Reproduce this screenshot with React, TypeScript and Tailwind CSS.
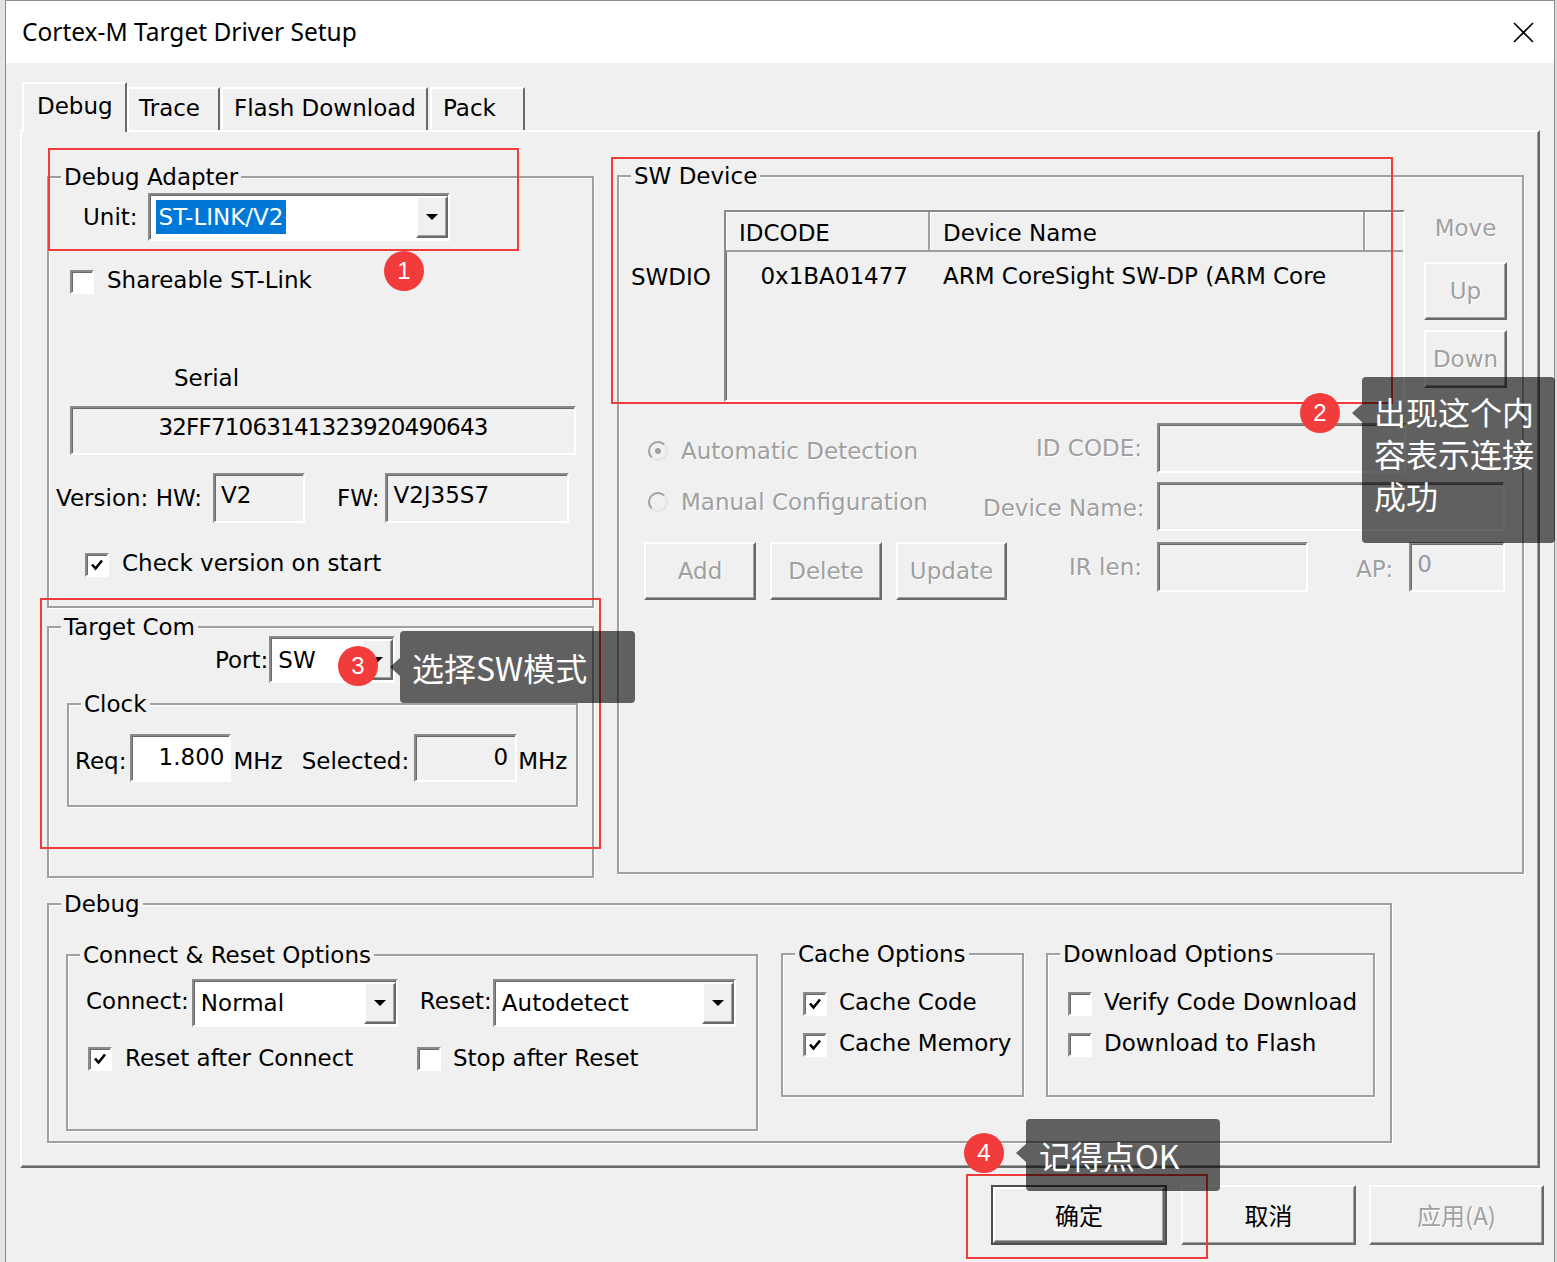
import React from "react";

// classic win32 3d edges
const sunken =
  "border-2 border-t-[#8a8a8a] border-l-[#8a8a8a] border-r-white border-b-white shadow-[inset_1px_1px_0_#696969]";
const raised =
  "border-2 border-t-white border-l-white border-r-[#696969] border-b-[#696969] shadow-[inset_-1px_-1px_0_#a0a0a0]";
const dim = "text-[#a0a0a0] [text-shadow:1px_1px_0_#fff]";
const cjk = "font-['Noto_Sans_CJK_SC',sans-serif]";
const redBox = "absolute border-2 border-[#f23b3b]";

function Group({ label, className = "", children }: { label: string; className?: string; children?: React.ReactNode }) {
  return (
    <div className={`relative shrink-0 border-2 border-[#a0a0a0] shadow-[1px_1px_0_#fff,inset_1px_1px_0_#fff] ${className}`}>
      <span className="absolute -top-[14px] left-[12px] whitespace-nowrap bg-[#f0f0f0] px-[3px] leading-[26px]">{label}</span>
      {children}
    </div>
  );
}

const Arrow = () => <span className="h-0 w-0 border-x-[6px] border-t-[6px] border-x-transparent border-t-black" />;

function Combo({ value, className = "", selected }: { value: string; className?: string; selected?: boolean }) {
  return (
    <div className={`${sunken} flex shrink-0 bg-white ${className}`}>
      <div className="flex flex-1 items-center overflow-hidden whitespace-nowrap pl-[6px]">
        {selected ? <span className="bg-[#0078d7] px-[3px] leading-[34px] text-white">{value}</span> : <span className="pl-[1px]">{value}</span>}
      </div>
      <div className={`${raised} my-[1px] flex w-[32px] items-center justify-center bg-[#f0f0f0]`}>
        <Arrow />
      </div>
    </div>
  );
}

function Field({ className = "", children }: { className?: string; children?: React.ReactNode }) {
  return <div className={`${sunken} shrink-0 whitespace-nowrap ${className}`}>{children}</div>;
}

function CheckBox({ checked }: { checked?: boolean }) {
  return (
    <span className={`${sunken} flex h-[24px] w-[24px] shrink-0 items-center justify-center bg-white`}>
      {checked && (
        <svg width="14" height="14" viewBox="0 0 14 14">
          <path d="M2 6.5 L5.5 10.5 L12 2.5" fill="none" stroke="#000" strokeWidth="2.6" />
        </svg>
      )}
    </span>
  );
}

function Radio({ on }: { on?: boolean }) {
  return (
    <span className="flex h-[20px] w-[20px] shrink-0 items-center justify-center rounded-full border-2 border-t-[#a0a0a0] border-l-[#a0a0a0] border-r-[#e3e3e3] border-b-[#e3e3e3] bg-[#f0f0f0]">
      {on && <span className="h-[6px] w-[6px] rounded-full bg-[#a0a0a0]" />}
    </span>
  );
}

function Btn({ className = "", disabled, children }: { className?: string; disabled?: boolean; children: React.ReactNode }) {
  return (
    <div className={`${raised} flex shrink-0 items-center justify-center bg-[#f0f0f0] ${disabled ? dim : ""} ${className}`}>
      {children}
    </div>
  );
}

function Badge({ n, className }: { n: string; className: string }) {
  return (
    <div className={`absolute flex h-[40px] w-[40px] items-center justify-center rounded-full bg-[#f23b3b] font-['Liberation_Sans',sans-serif] text-[24px] text-white ${className}`}>
      {n}
    </div>
  );
}

function Tip({ className, arrow, children }: { className: string; arrow: string; children: React.ReactNode }) {
  return (
    <div className={`absolute rounded-[4px] bg-black/60 ${cjk} text-[32px] leading-[42px] text-white ${className}`}>
      <span className={`absolute -left-[10px] h-0 w-0 border-y-[9px] border-r-[10px] border-y-transparent border-r-black/60 ${arrow}`} />
      {children}
    </div>
  );
}

function ListView() {
  return (
    <div className={`${sunken} h-[192px] w-[681px] shrink-0 overflow-hidden bg-[#f0f0f0]`}>
      <div className="flex h-[40px] border-b-2 border-[#a0a0a0]">
        <div className="flex w-[204px] items-center border-r-2 border-[#a0a0a0] pl-[13px] pt-[3px] shadow-[inset_1px_1px_0_#fff]">IDCODE</div>
        <div className="flex w-[435px] items-center border-r-2 border-[#a0a0a0] pl-[13px] pt-[3px] shadow-[inset_1px_1px_0_#fff]">Device Name</div>
        <div className="flex-1 shadow-[inset_1px_1px_0_#fff]" />
      </div>
      <div className="flex h-[48px] items-center whitespace-nowrap">
        <div className="w-[204px] pr-[22px] text-right">0x1BA01477</div>
        <div className="w-[435px] overflow-hidden pl-[13px]">ARM CoreSight SW-DP (ARM Core</div>
      </div>
    </div>
  );
}

export default function App() {
  return (
    <div className="relative flex h-[1262px] w-[1557px] overflow-hidden bg-[#e4e4e4] font-['DejaVu_Sans',sans-serif] text-[23px] leading-[26px] text-black">
      <div className="w-[5px] shrink-0 bg-[#e4e4e4]" />
      <div className="flex w-[1550px] shrink-0 flex-col border-x border-t border-[#8c8c8c] bg-[#f0f0f0]">
        {/* Title bar */}
        <div className="flex h-[62px] items-center justify-between bg-white pl-[16px] pr-[20px]">
          <span className="font-['Noto_Sans',sans-serif] text-[24.5px]">Cortex-M Target Driver Setup</span>
          <svg width="21" height="21" viewBox="0 0 21 21">
            <path d="M1 1 L20 20 M20 1 L1 20" stroke="#000" strokeWidth="1.6" />
          </svg>
        </div>

        {/* Tabs */}
        <div className="ml-[16px] mt-[19px] flex h-[48px] items-end">
          <div className="relative z-10 -mb-[2px] h-[50px] w-[105px] border-x-2 border-t-2 border-l-white border-t-white border-r-[#696969] bg-[#f0f0f0] pl-[13px] pt-[9px]">Debug</div>
          <div className="h-[43px] w-[93px] border-x-2 border-t-2 border-l-white border-t-white border-r-[#696969] pl-[10px] pt-[6px]">Trace</div>
          <div className="ml-[1px] h-[43px] w-[207px] border-x-2 border-t-2 border-l-white border-t-white border-r-[#696969] pl-[11px] pt-[6px]">Flash Download</div>
          <div className="ml-[2px] h-[43px] w-[95px] border-x-2 border-t-2 border-l-white border-t-white border-r-[#696969] pl-[11px] pt-[6px]">Pack</div>
        </div>

        {/* Tab page */}
        <div className={`${raised} ml-[14px] h-[1038px] w-[1520px]`}>
          <div className="flex items-start pl-[25px] pt-[43px]">
            {/* left column */}
            <div className="mt-[1px] flex flex-col">
              <Group label="Debug Adapter" className="h-[432px] w-[547px]">
                <div className="ml-[34px] mt-[15px] flex items-center">
                  <span>Unit:</span>
                  <Combo value="ST-LINK/V2" selected className="ml-[10px] h-[48px] w-[302px]" />
                </div>
                <div className="ml-[21px] mt-[29px] flex items-center">
                  <CheckBox />
                  <span className="-mt-[5px] ml-[13px]">Shareable ST-Link</span>
                </div>
                <div className="ml-[125px] mt-[71px]">Serial</div>
                <Field className="ml-[21px] mt-[15px] h-[49px] w-[506px] pt-[6px] text-center tracking-[-0.8px]">32FF71063141323920490643</Field>
                <div className="ml-[7px] mt-[18px] flex items-center">
                  <span>Version: HW:</span>
                  <Field className="ml-[11px] h-[50px] w-[92px] pl-[6px] pt-[7px]">V2</Field>
                  <span className="ml-[32px]">FW:</span>
                  <Field className="ml-[6px] h-[50px] w-[184px] pl-[6px] pt-[7px]">V2J35S7</Field>
                </div>
                <div className="ml-[36px] mt-[30px] flex items-center">
                  <CheckBox checked />
                  <span className="-mt-[5px] ml-[13px]">Check version on start</span>
                </div>
              </Group>

              <Group label="Target Com" className="mt-[18px] h-[252px] w-[547px]">
                <div className="ml-[166px] mt-[8px] flex items-center">
                  <span>Port:</span>
                  <Combo value="SW" className="ml-[1px] h-[47px] w-[126px]" />
                </div>
                <Group label="Clock" className="ml-[18px] mt-[20px] h-[104px] w-[511px]">
                  <div className="ml-[6px] mt-[29px] flex items-center">
                    <span className="mt-[6px]">Req:</span>
                    <Field className="ml-[4px] h-[48px] w-[101px] bg-white pr-[5px] pt-[8px] text-right">1.800</Field>
                    <span className="ml-[2px] mt-[6px]">MHz</span>
                    <span className="ml-[19px] mt-[6px]">Selected:</span>
                    <Field className="ml-[5px] h-[48px] w-[103px] pr-[7px] pt-[8px] text-right">0</Field>
                    <span className="ml-[1px] mt-[6px]">MHz</span>
                  </div>
                </Group>
              </Group>
            </div>

            {/* right column */}
            <Group label="SW Device" className="ml-[23px] h-[699px] w-[907px]">
              <div className="ml-[12px] mt-[33px] flex items-start">
                <div className="w-[93px] pt-[54px]">SWDIO</div>
                <ListView />
                <div className="ml-[19px] flex w-[83px] flex-col items-center">
                  <span className={`mt-[5px] ${dim}`}>Move</span>
                  <Btn disabled className="mt-[21px] h-[58px] w-[83px]">Up</Btn>
                  <Btn disabled className="mt-[10px] h-[58px] w-[83px]">Down</Btn>
                </div>
              </div>

              <div className="ml-[25px] mt-[21px] flex flex-col">
                <div className="flex h-[50px] items-center">
                  <div className="flex w-[339px] items-center pl-[4px] pt-[6px]">
                    <Radio on />
                    <span className={`ml-[13px] ${dim}`}>Automatic Detection</span>
                  </div>
                  <div className={`w-[159px] whitespace-nowrap text-right ${dim}`}>ID CODE:</div>
                  <Field className="ml-[15px] h-[50px] w-[249px]" />
                </div>
                <div className="mt-[9px] flex h-[49px] items-center">
                  <div className="flex w-[339px] items-center pb-[10px] pl-[4px]">
                    <Radio />
                    <span className={`ml-[13px] ${dim}`}>Manual Configuration</span>
                  </div>
                  <div className={`w-[159px] whitespace-nowrap pt-[2px] text-right ${dim}`}>Device Name:</div>
                  <Field className="ml-[15px] h-[49px] w-[348px]" />
                </div>
                <div className="mt-[11px] flex items-start">
                  <div className="flex w-[339px] shrink-0">
                    <Btn disabled className="h-[58px] w-[112px]">Add</Btn>
                    <Btn disabled className="ml-[14px] h-[58px] w-[112px]">Delete</Btn>
                    <Btn disabled className="ml-[14px] h-[58px] w-[111px]">Update</Btn>
                  </div>
                  <div className={`mt-[12px] w-[159px] whitespace-nowrap text-right ${dim}`}>IR len:</div>
                  <Field className="ml-[15px] h-[50px] w-[151px]" />
                  <span className={`ml-[48px] mt-[14px] ${dim}`}>AP:</span>
                  <Field className="ml-[16px] h-[50px] w-[96px] pl-[6px] pt-[7px] text-[#8e9aae]">0</Field>
                </div>
              </div>
            </Group>
          </div>

          {/* Debug options */}
          <Group label="Debug" className="ml-[25px] mt-[25px] h-[240px] w-[1345px]">
            <div className="ml-[17px] mt-[49px] flex items-start">
              <Group label="Connect & Reset Options" className="h-[177px] w-[692px]">
                <div className="ml-[18px] mt-[23px] flex items-center">
                  <span className="-mt-[4px]">Connect:</span>
                  <Combo value="Normal" className="ml-[3px] h-[48px] w-[206px]" />
                  <span className="-mt-[4px] ml-[22px]">Reset:</span>
                  <Combo value="Autodetect" className="ml-[1px] h-[48px] w-[243px]" />
                </div>
                <div className="ml-[20px] mt-[20px] flex items-center">
                  <div className="flex w-[329px] items-center">
                    <CheckBox checked />
                    <span className="-mt-[3px] ml-[13px]">Reset after Connect</span>
                  </div>
                  <CheckBox />
                  <span className="-mt-[3px] ml-[12px]">Stop after Reset</span>
                </div>
              </Group>

              <Group label="Cache Options" className="-mt-[1px] ml-[23px] h-[144px] w-[243px]">
                <div className="ml-[20px] mt-[37px] flex items-center">
                  <CheckBox checked />
                  <span className="-mt-[4px] ml-[12px]">Cache Code</span>
                </div>
                <div className="ml-[20px] mt-[17px] flex items-center">
                  <CheckBox checked />
                  <span className="-mt-[4px] ml-[12px] whitespace-nowrap">Cache Memory</span>
                </div>
              </Group>

              <Group label="Download Options" className="-mt-[1px] ml-[22px] h-[144px] w-[329px]">
                <div className="ml-[20px] mt-[37px] flex items-center">
                  <CheckBox />
                  <span className="-mt-[4px] ml-[12px] whitespace-nowrap">Verify Code Download</span>
                </div>
                <div className="ml-[20px] mt-[17px] flex items-center">
                  <CheckBox />
                  <span className="-mt-[4px] ml-[12px] whitespace-nowrap">Download to Flash</span>
                </div>
              </Group>
            </div>
          </Group>
        </div>

        {/* Dialog buttons */}
        <div className={`mt-[17px] flex justify-end pr-[10px] ${cjk} text-[24px]`}>
          <div className="h-[60px] w-[176px] border-2 border-[#4e4e4e]">
            <Btn className="h-full w-full">确定</Btn>
          </div>
          <Btn className="ml-[14px] h-[60px] w-[175px]">取消</Btn>
          <Btn disabled className="ml-[13px] h-[60px] w-[175px]">应用(A)</Btn>
        </div>
      </div>
      <div className="w-[2px] shrink-0 bg-[#dcdcdc]" />

      {/* annotations */}
      <div className={`${redBox} left-[48px] top-[148px] h-[103px] w-[471px]`} />
      <div className={`${redBox} left-[40px] top-[598px] h-[251px] w-[561px]`} />
      <div className={`${redBox} left-[611px] top-[157px] h-[247px] w-[782px]`} />
      <div className={`${redBox} left-[966px] top-[1174px] h-[85px] w-[242px]`} />

      <Tip className="left-[400px] top-[631px] flex h-[72px] w-[235px] items-center pl-[12px]" arrow="top-[27px]">
        选择SW模式
      </Tip>
      <Tip className="left-[1362px] top-[377px] h-[166px] w-[193px] pl-[12px] pt-[13px]" arrow="top-[27px]">
        <div className="w-[170px]">出现这个内容表示连接成功</div>
      </Tip>
      <Tip className="left-[1026px] top-[1119px] flex h-[72px] w-[194px] items-center pl-[13px]" arrow="top-[25px]">
        记得点OK
      </Tip>

      <Badge n="1" className="left-[384px] top-[251px]" />
      <Badge n="2" className="left-[1300px] top-[393px]" />
      <Badge n="3" className="left-[338px] top-[646px]" />
      <Badge n="4" className="left-[964px] top-[1133px]" />
    </div>
  );
}
